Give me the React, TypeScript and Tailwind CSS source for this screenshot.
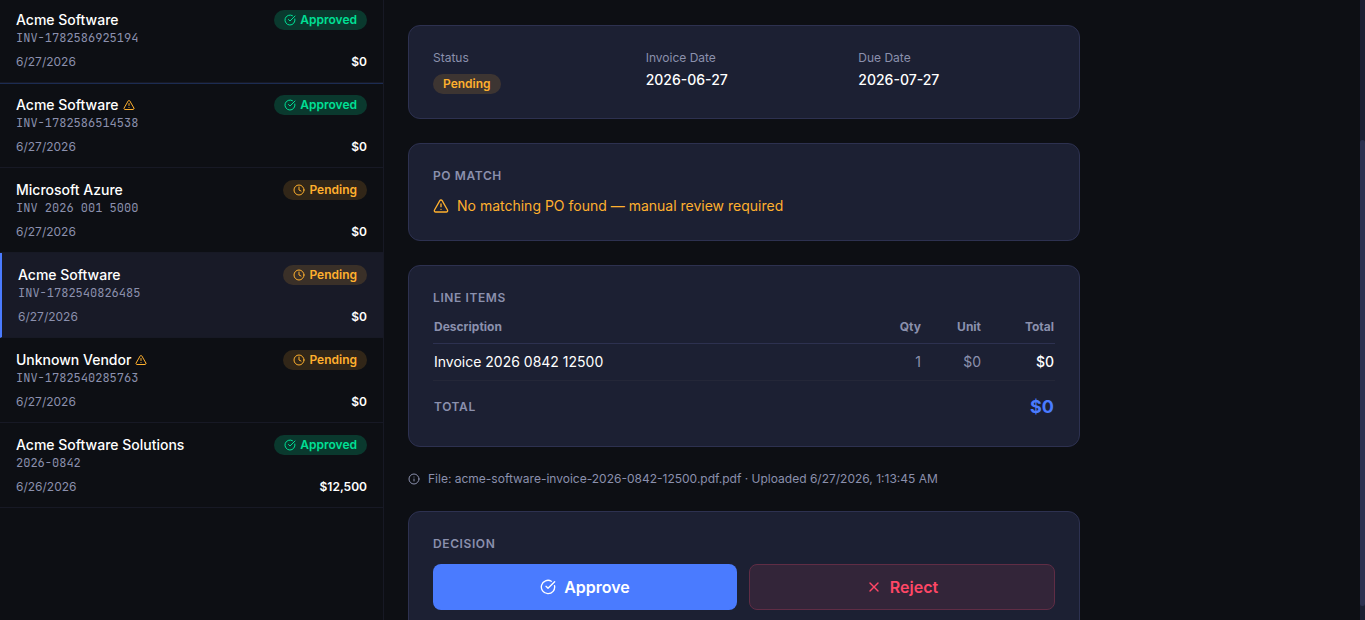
import React, { useState } from "react";
import { AlertTriangle, CircleCheckBig, Clock, Info, X } from "lucide-react";

type InvoiceStatus = "approved" | "pending";

interface Invoice {
  id: number;
  vendor: string;
  number: string;
  date: string;
  amount: string;
  status: InvoiceStatus;
  flagged?: boolean;
}

const invoices: Invoice[] = [
  { id: 1, vendor: "Acme Software", number: "INV-1782586925194", date: "6/27/2026", amount: "$0", status: "approved" },
  { id: 2, vendor: "Acme Software", number: "INV-1782586514538", date: "6/27/2026", amount: "$0", status: "approved", flagged: true },
  { id: 3, vendor: "Microsoft Azure", number: "INV 2026 001 5000", date: "6/27/2026", amount: "$0", status: "pending" },
  { id: 4, vendor: "Acme Software", number: "INV-1782540826485", date: "6/27/2026", amount: "$0", status: "pending" },
  { id: 5, vendor: "Unknown Vendor", number: "INV-1782540285763", date: "6/27/2026", amount: "$0", status: "pending", flagged: true },
  { id: 6, vendor: "Acme Software Solutions", number: "2026-0842", date: "6/26/2026", amount: "$12,500", status: "approved" },
];

const lineItems = [{ description: "Invoice 2026 0842 12500", qty: 1, unit: "$0", total: "$0" }];

function StatusBadge({ status, showIcon = true }: { status: InvoiceStatus; showIcon?: boolean }) {
  const approved = status === "approved";
  const Icon = approved ? CircleCheckBig : Clock;

  return (
    <span
      className={`inline-flex items-center gap-1 h-5 px-2.5 rounded-full text-xs font-semibold whitespace-nowrap ${
        approved ? "bg-[#00e096]/20 text-[#00e096]" : "bg-[#ffb02e]/15 text-[#ffb02e]"
      }`}
    >
      {showIcon && <Icon size={12} />}
      {approved ? "Approved" : "Pending"}
    </span>
  );
}

function Card({ title, children }: { title?: string; children: React.ReactNode }) {
  return (
    <section className="bg-[#1c2033] border border-[#2d3150] rounded-xl p-6">
      {title && (
        <h2 className="mb-3 text-xs leading-4 font-semibold uppercase tracking-wider text-[#8b90ad]">{title}</h2>
      )}
      {children}
    </section>
  );
}

function InvoiceRow({ invoice, selected, onSelect }: { invoice: Invoice; selected: boolean; onSelect: () => void }) {
  return (
    <button
      type="button"
      onClick={onSelect}
      className={`block w-full py-3 px-4 text-left border-b border-[#171925] ${
        selected ? "bg-[#181a27] border-l-2 border-l-[#4a7bff]" : ""
      } ${invoice.id === 2 ? "shadow-[inset_0_1px_0_#1c2c52]" : ""}`}
    >
      <div className="flex items-start justify-between">
        <div>
          <div className="flex items-center gap-1 text-sm leading-5 font-medium text-white">
            {invoice.vendor}
            {invoice.flagged && <AlertTriangle size={12} className="text-[#ffb02e]" />}
          </div>
          <div className="font-['JetBrains_Mono','Liberation_Mono',monospace] text-xs leading-4 text-[#8b90ad]">
            {invoice.number}
          </div>
        </div>
        <StatusBadge status={invoice.status} />
      </div>
      <div className="mt-2 flex items-center justify-between text-xs leading-4">
        <span className="text-[#8b90ad]">{invoice.date}</span>
        <span className="font-semibold text-white">{invoice.amount}</span>
      </div>
    </button>
  );
}

export default function App() {
  const [selectedId, setSelectedId] = useState(4);

  return (
    <div className="flex h-screen overflow-hidden bg-[#0d0f14] text-white font-['Inter',sans-serif]">
      {/* Invoice list */}
      <aside className="w-96 shrink-0 border-r border-[#171925] overflow-hidden">
        <div className="-mt-0.5">
          {invoices.map((invoice) => (
            <InvoiceRow
              key={invoice.id}
              invoice={invoice}
              selected={invoice.id === selectedId}
              onSelect={() => setSelectedId(invoice.id)}
            />
          ))}
        </div>
      </aside>

      {/* Invoice detail */}
      <main className="flex-1 min-w-0 overflow-hidden px-6 pt-[25px]">
        <div className="max-w-2xl flex flex-col gap-6">
          <Card>
            <dl className="grid grid-cols-3 gap-4">
              <div>
                <dt className="text-xs leading-4 text-[#8b90ad]">Status</dt>
                <dd className="mt-2 flex">
                  <StatusBadge status="pending" showIcon={false} />
                </dd>
              </div>
              <div>
                <dt className="text-xs leading-4 text-[#8b90ad]">Invoice Date</dt>
                <dd className="mt-1 text-sm leading-5 font-medium">2026-06-27</dd>
              </div>
              <div>
                <dt className="text-xs leading-4 text-[#8b90ad]">Due Date</dt>
                <dd className="mt-1 text-sm leading-5 font-medium">2026-07-27</dd>
              </div>
            </dl>
          </Card>

          <Card title="PO Match">
            <p className="flex items-center gap-2 text-sm leading-5 text-[#ffb02e]">
              <AlertTriangle size={16} />
              No matching PO found — manual review required
            </p>
          </Card>

          <Card title="Line Items">
            <table className="w-full text-sm leading-5">
              <thead>
                <tr className="border-b border-[#2d3150] text-xs leading-4 text-[#8b90ad]">
                  <th className="px-px pt-px pb-2 text-left font-bold">Description</th>
                  <th className="px-px pt-px pb-2 w-15 text-right font-bold">Qty</th>
                  <th className="px-px pt-px pb-2 w-15 text-right font-bold">Unit</th>
                  <th className="px-px pt-px pb-2 w-[73px] text-right font-bold">Total</th>
                </tr>
              </thead>
              <tbody>
                {lineItems.map((item) => (
                  <tr key={item.description} className="border-b border-[#242738]">
                    <td className="px-px py-2">{item.description}</td>
                    <td className="px-px py-2 text-right text-[#8b90ad]">{item.qty}</td>
                    <td className="px-px py-2 text-right text-[#8b90ad]">{item.unit}</td>
                    <td className="px-px py-2 text-right font-medium">{item.total}</td>
                  </tr>
                ))}
              </tbody>
              <tfoot>
                <tr>
                  <td colSpan={3} className="px-px pt-3 pb-px text-xs font-semibold tracking-wider text-[#8b90ad]">
                    TOTAL
                  </td>
                  <td className="px-px pt-3 pb-px text-right text-lg leading-7 font-bold text-[#4a7bff]">$0</td>
                </tr>
              </tfoot>
            </table>
          </Card>

          <p className="flex items-center gap-2 text-xs leading-4 text-[#8b90ad]">
            <Info size={12} />
            File: acme-software-invoice-2026-0842-12500.pdf.pdf · Uploaded 6/27/2026, 1:13:45 AM
          </p>

          <Card title="Decision">
            <div className="flex gap-3">
              <button
                type="button"
                className="flex-1 flex items-center justify-center gap-2 px-4 rounded-lg bg-[#4a7bff] text-white font-semibold"
              >
                <CircleCheckBig size={16} />
                Approve
              </button>
              <button
                type="button"
                className="flex-1 flex items-center justify-center gap-2 px-4 py-2.5 rounded-lg border border-[#602d45] bg-[#332539] text-[#ff4766] font-semibold"
              >
                <X size={16} />
                Reject
              </button>
            </div>
          </Card>
        </div>
      </main>

      {/* Scroll track */}
      <div className="w-[5px] shrink-0 bg-[#1c2033] pt-35 pb-3.5">
        <div className="h-full rounded-full bg-[#2d3150]" />
      </div>
    </div>
  );
}
